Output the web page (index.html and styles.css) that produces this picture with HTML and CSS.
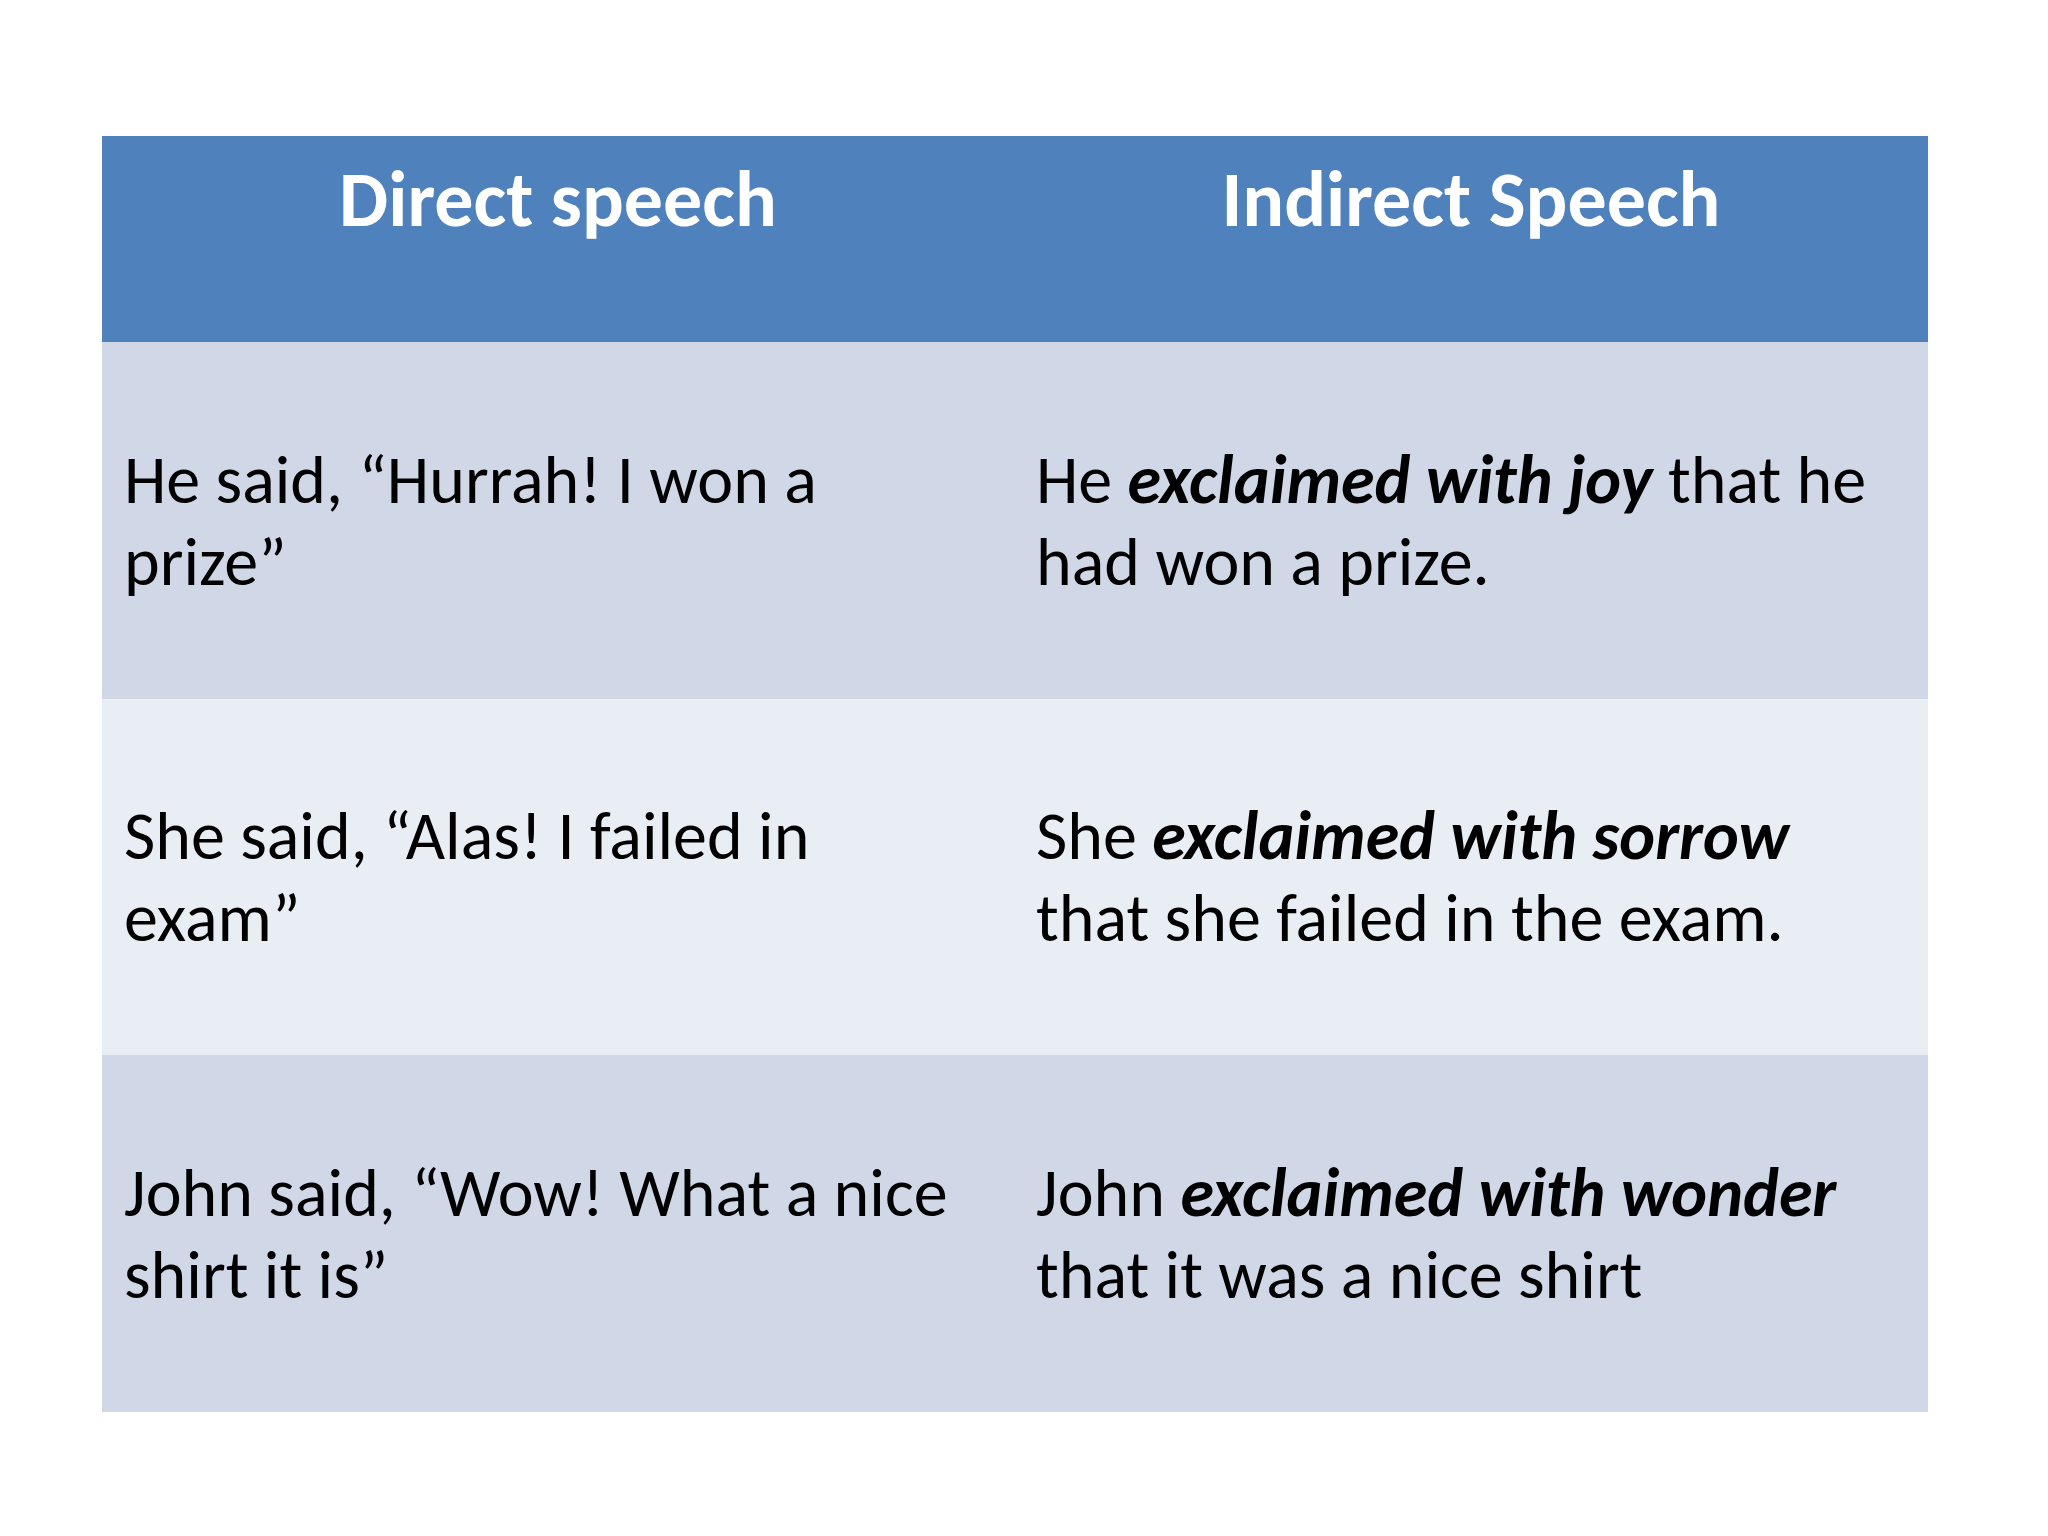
FILE: index.html
```html
<!DOCTYPE html>
<html lang="en">
<head>
<meta charset="utf-8">
<title>Direct and Indirect Speech</title>
<link rel="stylesheet" href="styles.css">
</head>
<body>
<div class="slide">
  <div class="table">
    <div class="row head">
      <div class="cell">Direct speech</div>
      <div class="cell">Indirect Speech</div>
    </div>
    <div class="row band1">
      <div class="cell"><p>He said, “Hurrah! I won a prize”</p></div>
      <div class="cell"><p>He <b><i>exclaimed with joy</i></b> that he had won a prize.</p></div>
    </div>
    <div class="row band2">
      <div class="cell"><p>She said, “Alas! I failed in exam”</p></div>
      <div class="cell"><p>She <b><i>exclaimed with sorrow</i></b> that she failed in the exam.</p></div>
    </div>
    <div class="row band1">
      <div class="cell"><p>John said, “Wow! What a nice shirt it is”</p></div>
      <div class="cell"><p>John <b><i>exclaimed with wonder</i></b> that it was a nice shirt</p></div>
    </div>
  </div>
</div>
</body>
</html>
```
FILE: styles.css
```css
html, body {
  margin: 0;
  padding: 0;
  background: #ffffff;
}
.slide {
  width: 2048px;
  height: 1536px;
  padding: 136px 120px 0 102px;
  box-sizing: border-box;
  font-family: Carlito, Calibri, Lato, "Liberation Sans", sans-serif;
}
.table {
  width: 1826px;
  display: flex;
  flex-direction: column;
}
.row {
  display: grid;
  grid-template-columns: 912px 914px;
}
.head {
  height: 206px;
  background: #4f81bd;
  color: #ffffff;
  font-weight: bold;
  font-size: 78px;
  line-height: 1;
}
.head .cell {
  text-align: center;
  padding-top: 25px;
}
.band1, .band2 {
  height: 357px;
  font-size: 68px;
  line-height: 82px;
  color: #000000;
}
.band1 { background: #d0d8e8; }
.band2 { background: #e9edf4; height: 356px; }
.band1 .cell, .band2 .cell {
  display: flex;
  align-items: center;
  padding: 0 30px 0 22px;
}
.cell p {
  margin: 0;
}
.cell b i { font-weight: bold; font-style: italic; }
```
